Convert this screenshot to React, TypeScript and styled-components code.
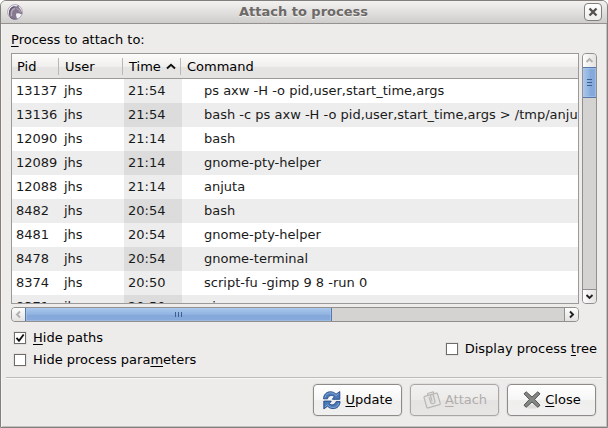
import React, { useState } from "react";
import styled, { createGlobalStyle, css } from "styled-components";

const Global = createGlobalStyle`
  *, *::before, *::after { box-sizing: border-box; }
  body { margin: 0; background: #fff; }
  body, button, input { font: 13px/16px "DejaVu Sans", sans-serif; color: #1a1a1a; }
`;

const Dialog = styled.main`
  display: flex;
  flex-direction: column;
  height: 100vh;
  border: 1px solid #827f7d;
  border-radius: 6px 6px 0 0;
  background: #edeceb;
  box-shadow: inset 1px 0 #f6f5f4, inset -1px -1px #c4c2c0;
  overflow: hidden;
`;

const TitleBar = styled.header`
  display: flex;
  align-items: center;
  flex: none;
  height: 23px;
  padding: 0 5px 0 6px;
  border-bottom: 1px solid #94918f;
  background: linear-gradient(#f3f2f1, #e3e2e1 45%, #cfcdcb);
`;

const Title = styled.h1`
  flex: 1;
  margin: 0;
  text-align: center;
  font-size: 13px;
  line-height: 16px;
  color: #6c6967;
  text-shadow: 0 1px #f0efee;
`;

const TitleButton = styled.button`
  display: grid;
  place-items: center;
  width: 18px;
  height: 18px;
  padding: 0;
  border: 1px solid #817e7c;
  border-radius: 4px;
  background: linear-gradient(#fff, #eeedec);
`;

const Body = styled.section`
  display: flex;
  flex-direction: column;
  flex: 1;
  min-height: 0;
  padding: 8px 10px 6px 10px;
`;

const ListLabel = styled.h2`
  margin: 0 0 5px;
  font-size: 13px;
  font-weight: normal;
  line-height: 16px;
  color: #000;
`;

const Key = styled.span`
  text-decoration: underline;
  text-decoration-thickness: 1px;
  text-underline-offset: 2px;
  text-decoration-skip-ink: none;
`;

const ListArea = styled.div`
  display: grid;
  grid-template-columns: minmax(0, 1fr) 15px;
  grid-template-rows: minmax(0, 1fr) 15px;
  gap: 3px;
  flex: 1;
  min-height: 0;
`;

const ListFrame = styled.div`
  border: 1px solid #9c9a98;
  background: #fff;
  overflow: hidden;
`;

const Table = styled.table`
  width: 100%;
  table-layout: fixed;
  border-collapse: separate;
  border-spacing: 0;
`;

const HeadCell = styled.th<{ $last?: boolean }>`
  height: 25px;
  padding: 1px 0 0 5px;
  border-bottom: 1px solid #9c9a98;
  text-align: left;
  font-weight: normal;
  color: #000;
  background:
    ${(p) => (p.$last ? "" : "linear-gradient(#bab8b6, #bab8b6) right 1px center / 1px 17px no-repeat,")}
    linear-gradient(#fcfcfb, #f0efee 52%, #e6e4e3 54%, #e6e4e3);
`;

const SortArrow = styled.svg`
  margin-left: 5px;
  vertical-align: 1px;
`;

const Cell = styled.td<{ $sorted?: boolean; $indent?: boolean }>`
  height: 24px;
  padding: 0 0 0 ${(p) => (p.$indent ? 22 : 4)}px;
  white-space: nowrap;
  overflow: hidden;
  background: ${(p) => (p.$sorted ? "#ededed" : "#fff")};
`;

const Row = styled.tr`
  &:nth-child(even) ${Cell} { background: #ededed; }
  &:nth-child(even) ${Cell}:nth-child(3) { background: #dcdcdc; }
`;

type Axis = { $vertical?: boolean };

const Bar = styled.div<Axis>`
  display: flex;
  flex-direction: ${(p) => (p.$vertical ? "column" : "row")};
  border: 1px solid #92908d;
  border-radius: 4px;
  background: #d5d3d1;
  overflow: hidden;
`;

const Stepper = styled.button<Axis & { $end?: boolean }>`
  display: grid;
  place-items: center;
  flex: none;
  width: 13px;
  height: 13px;
  padding: 0;
  border: 0 solid #92908d;
  background: linear-gradient(${(p) => (p.$vertical ? "90deg, " : "")}#fdfdfd, #e4e2e1);
  ${(p) => p.$end && (p.$vertical
    ? css`border-top-width: 1px; height: 14px;`
    : css`border-left-width: 1px; width: 14px;`)}
`;

const Trough = styled.div<Axis>`
  display: flex;
  flex-direction: ${(p) => (p.$vertical ? "column" : "row")};
  flex: 1;
  min-width: 0;
  min-height: 0;
`;

const Thumb = styled.div<Axis>`
  display: grid;
  place-items: center;
  flex: none;
  border: 1px solid #5878aa;
  box-shadow: inset 0 0 0 1px rgba(175, 203, 238, 0.5);
  ${(p) => (p.$vertical
    ? css`
        height: 31px;
        background: linear-gradient(90deg, #a9c7ec, #8db1df 50%, #84a8d9 52%, #86aadb);
        border-width: 1px 0;
      `
    : css`
        width: 57%;
        background: linear-gradient(#a9c7ec, #8fb3e0 50%, #84a8d9 52%, #86aadb);
        border-width: 0 1px;
      `)}
`;

const Options = styled.div`
  display: flex;
  justify-content: space-between;
  align-items: center;
  margin-top: 5px;
  color: #000;
`;

const OptionColumn = styled.div`
  display: flex;
  flex-direction: column;
`;

const Option = styled.label`
  display: flex;
  align-items: center;
  gap: 7px;
  height: 22px;
  padding: 0 0 0 3px;
`;

const CheckBox = styled.input`
  appearance: none;
  width: 12px;
  height: 12px;
  margin: 0;
  border: 1px solid #6f6c6a;
  background: #fff;
  box-shadow: 0 0 0 1px #e2e0df;
`;

const CheckHolder = styled.span`
  display: grid;
  > * { grid-area: 1 / 1; }
  > svg { pointer-events: none; }
`;

const Footer = styled.footer`
  display: flex;
  justify-content: flex-end;
  flex: none;
  gap: 8px;
  margin: 0 5px;
  padding: 6px 6px 11px 0;
  border-top: 1px solid #bdbbb9;
  box-shadow: inset 0 1px #f8f7f7;
`;

const ActionButton = styled.button`
  display: flex;
  align-items: center;
  justify-content: center;
  gap: 3px;
  width: 89px;
  height: 32px;
  padding: 0;
  border: 1px solid #8d8a88;
  border-radius: 4px;
  color: #000;
  background: linear-gradient(#fff, #f7f6f6 50%, #efeeed 52%, #f1f0f0);
  box-shadow: 0 0 0 1px #e3e1e0;
  &:disabled {
    color: #b0adab;
    border-color: #a9a6a4;
    background: linear-gradient(#f2f1f1, #ecebea 50%, #e5e3e2 52%, #e7e6e5);
  }
`;

const HorseIcon = () => (
  <svg width="16" height="16" viewBox="0 0 16 16" aria-hidden="true">
    <circle cx="8" cy="8" r="7.400" fill="#f4f2f7" stroke="#a8a0b0" strokeWidth=".9" />
    <path d="M2.200 12.200C1.200 7.500 3 3.300 6.800 2.400c1-.3 2-.2 3 .2L11.300.8l.7 2.700c1.500 1.300 2.200 3 3.300 5.200.3 1-.6 1.800-1.600 1.400L11.500 9.200 9.200 9.600c-.4 1.700.2 3 .6 4.400L8 15.300c-2.500 0-4.600-1.100-5.800-3.100z" fill="#85798f" />
    <path d="M2.500 10.500C2.300 6.500 4 3.500 7.500 2.700" fill="none" stroke="#5f5269" strokeWidth="1.200" />
    <path d="M4.600 12C3.900 8.500 5 5.500 7.800 4.300" fill="none" stroke="#b7aebf" strokeWidth="1.300" />
    <path d="M9.500 4.500l2.500 1.200 1.800 2.800" fill="none" stroke="#a79dae" strokeWidth="1.200" />
    <path d="M3 13c1.800 1.900 4.500 2.600 7.500 1.700" fill="none" stroke="#6b5e76" />
  </svg>
);

const arrowPaths = {
  up: "M1.500 6 4.500 3l3 3",
  down: "M1.500 3l3 3 3-3",
  left: "M6 1.500 3 4.500l3 3",
  right: "M3 1.500l3 3-3 3",
};

const Arrow = ({ to, dim }: { to: keyof typeof arrowPaths; dim?: boolean }) => (
  <svg width="9" height="9" viewBox="0 0 9 9" aria-hidden="true">
    <path d={arrowPaths[to]} fill="none" stroke={dim ? "#b3b1af" : "#222"} strokeWidth="1.900" />
  </svg>
);

const Grip = ({ vertical }: { vertical?: boolean }) => (
  <svg width="7" height="7" viewBox="0 0 7 7" aria-hidden="true" shapeRendering="crispEdges">
    <path
      d={vertical ? "M1 .5h5M1 3.500h5M1 6.500h5" : "M.5 1v5M3.500 1v5M6.500 1v5"}
      stroke="#3d6092"
    />
  </svg>
);

const RefreshArrow = () => (
  <>
    <path d="M1.500 8.800C1.700 4.500 4.500 1.800 8.500 1.800c2.500 0 4.200 1 5.500 2.400L17.800 1.500V9.300H10.300L12.300 6.700C10.500 4.900 6.700 4.800 5.500 8.800z" fill="#4a79b6" stroke="#204a87" strokeWidth=".9" />
    <path d="M3 7.600C3.500 4.500 5.800 2.900 8.500 2.900c2.400 0 4 1 5.500 2.700L16.700 3.500" fill="none" stroke="#8fb2dd" strokeWidth=".8" />
  </>
);

const RefreshIcon = () => (
  <svg width="20" height="20" viewBox="0 0 20 20" aria-hidden="true" strokeLinejoin="round">
    <RefreshArrow />
    <g transform="rotate(180 9.800 10.200)"><RefreshArrow /></g>
  </svg>
);

const AttachIcon = () => (
  <svg width="20" height="20" viewBox="0 0 20 20" aria-hidden="true" fill="none" stroke="#b9b7b5" strokeLinejoin="round">
    <g transform="rotate(-16 10 10)">
      <rect x="3" y="4.500" width="14" height="12" rx="1" fill="#e6e5e4" strokeWidth="1.200" />
      <path d="M7.500 4.500v-2h6v2" strokeWidth="1.200" />
      <path d="M8 6.500v5c0 3 4.500 3 4.500 0V6c0-2-2.800-2-2.800 0v5.500" strokeWidth="1.200" />
    </g>
  </svg>
);

const CloseIcon = () => (
  <svg width="20" height="20" viewBox="0 0 20 20" aria-hidden="true">
    <ellipse cx="10" cy="16.500" rx="8" ry="2" fill="#dddcda" />
    <path d="M2 3.800 4.200 1.800 10 7l5.800-5.200L18 3.800 12.600 9.400 18 15.200l-2.200 2L10 12l-5.800 5.200-2.200-2L7.400 9.400z" fill="#858784" stroke="#555753" strokeLinejoin="round" />
  </svg>
);

const processes = [
  ["13137", "21:54", "ps axw -H -o pid,user,start_time,args"],
  ["13136", "21:54", "bash -c ps axw -H -o pid,user,start_time,args > /tmp/anjuta"],
  ["12090", "21:14", "bash"],
  ["12089", "21:14", "gnome-pty-helper"],
  ["12088", "21:14", "anjuta"],
  ["8482", "20:54", "bash"],
  ["8481", "20:54", "gnome-pty-helper"],
  ["8478", "20:54", "gnome-terminal"],
  ["8374", "20:50", "script-fu -gimp 9 8 -run 0"],
  ["8371", "20:50", "gimp"],
];

type CheckProps = { initial?: boolean; children: React.ReactNode };

function Check({ initial = false, children }: CheckProps) {
  const [on, setOn] = useState(initial);
  return (
    <Option>
      <CheckHolder>
        <CheckBox type="checkbox" checked={on} onChange={() => setOn(!on)} />
        {on && (
          <svg width="12" height="12" viewBox="0 0 12 12" aria-hidden="true">
            <path d="M2.500 5.800 5 8.800 9.700 2.500" fill="none" stroke="#111" strokeWidth="1.900" />
          </svg>
        )}
      </CheckHolder>
      <span>{children}</span>
    </Option>
  );
}

export default function App() {
  return (
    <>
      <Global />
      <Dialog>
        <TitleBar>
          <HorseIcon />
          <Title>Attach to process</Title>
          <TitleButton aria-label="Close window">
            <svg width="10" height="10" viewBox="0 0 10 10" aria-hidden="true">
              <path d="M1.500 1.500l7 7M8.500 1.500l-7 7" stroke="#555250" strokeWidth="2.400" />
            </svg>
          </TitleButton>
        </TitleBar>
        <Body>
          <ListLabel id="list-label"><Key>P</Key>rocess to attach to:</ListLabel>
          <ListArea>
            <ListFrame>
              <Table aria-labelledby="list-label">
                <colgroup>
                  <col width="48" />
                  <col width="64" />
                  <col width="58" />
                  <col />
                </colgroup>
                <thead>
                  <tr>
                    <HeadCell>Pid</HeadCell>
                    <HeadCell>User</HeadCell>
                    <HeadCell aria-sort="descending">
                      Time
                      <SortArrow width="10" height="7" viewBox="0 0 10 7" aria-hidden="true">
                        <path d="M1 5.500 5 1.800l4 3.700" fill="none" stroke="#111" strokeWidth="1.900" />
                      </SortArrow>
                    </HeadCell>
                    <HeadCell $last>Command</HeadCell>
                  </tr>
                </thead>
                <tbody>
                  {processes.map(([pid, time, command]) => (
                    <Row key={pid}>
                      <Cell>{pid}</Cell>
                      <Cell>jhs</Cell>
                      <Cell $sorted>{time}</Cell>
                      <Cell $indent>{command}</Cell>
                    </Row>
                  ))}
                </tbody>
              </Table>
            </ListFrame>
            <Bar $vertical>
              <Stepper $vertical aria-label="Scroll up"><Arrow to="up" dim /></Stepper>
              <Trough $vertical><Thumb $vertical><Grip vertical /></Thumb></Trough>
              <Stepper $vertical $end aria-label="Scroll down"><Arrow to="down" /></Stepper>
            </Bar>
            <Bar>
              <Stepper aria-label="Scroll left"><Arrow to="left" dim /></Stepper>
              <Trough><Thumb><Grip /></Thumb></Trough>
              <Stepper $end aria-label="Scroll right"><Arrow to="right" /></Stepper>
            </Bar>
          </ListArea>
          <Options>
            <OptionColumn>
              <Check initial><Key>H</Key>ide paths</Check>
              <Check>Hide process para<Key>m</Key>eters</Check>
            </OptionColumn>
            <Check>Display process <Key>t</Key>ree</Check>
          </Options>
        </Body>
        <Footer>
          <ActionButton><RefreshIcon /><span><Key>U</Key>pdate</span></ActionButton>
          <ActionButton disabled><AttachIcon /><span><Key>A</Key>ttach</span></ActionButton>
          <ActionButton><CloseIcon /><span><Key>C</Key>lose</span></ActionButton>
        </Footer>
      </Dialog>
    </>
  );
}
